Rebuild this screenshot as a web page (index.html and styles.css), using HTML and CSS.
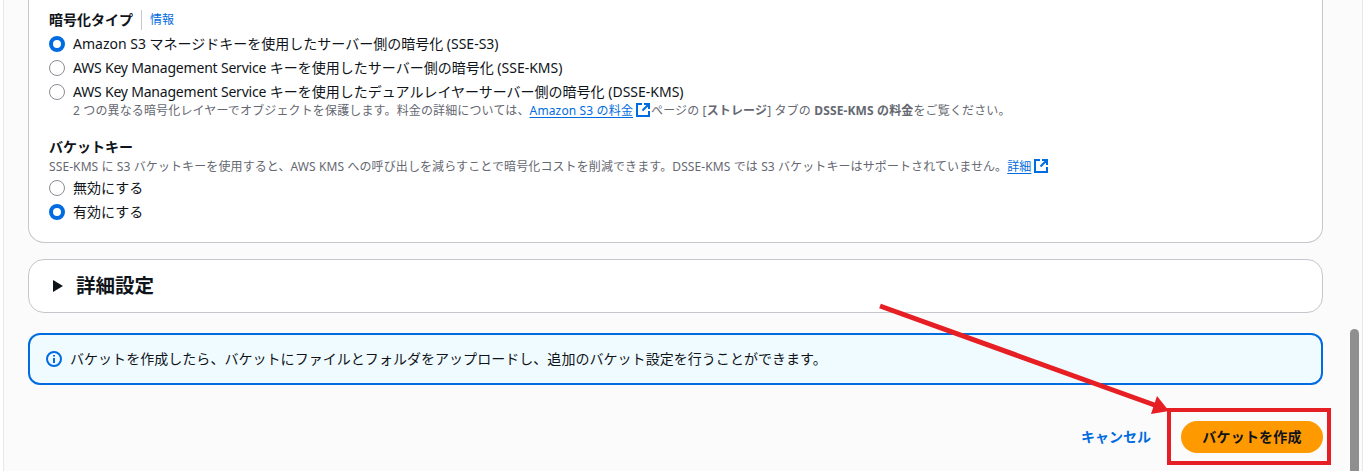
FILE: index.html
```html
<!DOCTYPE html>
<html lang="ja">
<head>
<meta charset="utf-8">
<title>バケットを作成</title>
<link rel="stylesheet" href="styles.css">
</head>
<body>
<div class="page">
  <main class="content">
    <section class="card card-main">
      <div class="field-label"><span>暗号化タイプ</span><a class="info" href="#">情報</a></div>
      <div class="radios">
        <div class="radio-row"><span class="radio checked"></span><div class="radio-text">Amazon S3 マネージドキーを使用したサーバー側の暗号化 (SSE-S3)</div></div>
        <div class="radio-row"><span class="radio"></span><div class="radio-text"><span class="latin">AWS Key Management Service</span> キーを使用したサーバー側の暗号化 (SSE-KMS)</div></div>
        <div class="radio-row"><span class="radio"></span><div class="radio-text"><span class="latin">AWS Key Management Service</span> キーを使用したデュアルレイヤーサーバー側の暗号化 (DSSE-KMS)
          <div class="desc desc-wide">2 つの異なる暗号化レイヤーでオブジェクトを保護します。料金の詳細については、<a class="link" href="#">Amazon S3 の料金</a><svg class="ext" viewBox="0 0 16 16"><path d="M14 9v5H2V2h5M9 2h5v5M14 2 7.500 8.500"/></svg>ページの [<b>ストレージ</b>] タブの <b>DSSE-KMS の料金</b>をご覧ください。</div>
        </div></div>
      </div>
      <div class="field-label key-label"><span>バケットキー</span></div>
      <div class="desc key-desc">SSE-KMS に S3 バケットキーを使用すると、AWS KMS への呼び出しを減らすことで暗号化コストを削減できます。DSSE-KMS では S3 バケットキーはサポートされていません。<a class="link" href="#">詳細</a><svg class="ext" viewBox="0 0 16 16"><path d="M14 9v5H2V2h5M9 2h5v5M14 2 7.500 8.500"/></svg></div>
      <div class="radios key-radios">
        <div class="radio-row"><span class="radio"></span><div class="radio-text">無効にする</div></div>
        <div class="radio-row"><span class="radio checked"></span><div class="radio-text">有効にする</div></div>
      </div>
    </section>

    <section class="card card-advanced">
      <span class="caret"></span><h2>詳細設定</h2>
    </section>

    <section class="alert">
      <svg class="info-icon" viewBox="0 0 16 16"><circle cx="8" cy="8" r="7"/><path d="M8 7v5M8 4v1.500"/></svg>
      <span class="alert-text">バケットを作成したら、バケットにファイルとフォルダをアップロードし、追加のバケット設定を行うことができます。</span>
    </section>

    <div class="actions">
      <a class="cancel" href="#">キャンセル</a>
      <button class="primary" type="button">バケットを作成</button>
    </div>
  </main>
  <div class="scroll-thumb"></div>
  <div class="mark-box"></div>
  <svg class="mark-arrow" viewBox="0 0 1366 471"><path class="shaft" d="M880 306 1160 407"/><path class="head" d="M1169 411 1157 396 1151 414Z"/></svg>
</div>
</body>
</html>
```
FILE: styles.css
```css
* { box-sizing: border-box; }
html, body { margin: 0; padding: 0; }
body {
  font-family: "Noto Sans", "Noto Sans CJK JP", sans-serif;
  font-size: 14px;
  line-height: 20px;
  color: #0f141a;
  background: #fff;
  overflow: hidden;
}
a { color: #006ce0; }
.page {
  position: relative;
  width: 1360px;
  height: 471px;
  overflow: hidden;
  margin: 0 0 0 3px;
  border-left: 1px solid #e8e8e8;
  border-right: 1px solid #e8e8e8;
  background: #fbfbfb;
}
.content { padding-left: 24px; width: 1319px; }
.card {
  background: #fff;
  border: 1px solid #c6c6cd;
  border-radius: 16px;
}
.card-main {
  border-top: 0;
  border-top-left-radius: 0;
  border-top-right-radius: 0;
  padding: 10px 20px 20px;
  height: 243px;
}
.field-label { display: flex; align-items: center; font-weight: 700; height: 20px; }
.info {
  font-size: 12px;
  font-weight: 400;
  text-decoration: none;
  margin-left: 8px;
  padding-left: 8px;
  border-left: 1px solid #c6c6cd;
  line-height: 20px;
}
.radios { display: flex; flex-direction: column; gap: 4px; margin-top: 4px; }
.radio-row { display: flex; gap: 8px; align-items: flex-start; }
.radio {
  flex: none;
  width: 16px;
  height: 16px;
  margin-top: 2px;
  border-radius: 50%;
  border: 1px solid #8c8c94;
  background: #fff;
}
.radio.checked { border: 4px solid #006ce0; }
.latin { letter-spacing: -0.2px; }
.desc { font-size: 12px; line-height: 16px; color: #656871; letter-spacing: 0.1px; }
.desc-wide { letter-spacing: 0.14px; }
.link { color: #006ce0; text-decoration: underline; text-underline-offset: 2px; }
.ext {
  width: 16px;
  height: 16px;
  margin-left: 2px;
  vertical-align: -3px;
  fill: none;
  stroke: #006ce0;
  stroke-width: 2;
}
.key-label { margin-top: 18px; }
.key-desc { margin-top: 1px; }
.key-radios { margin-top: 3px; }
.card-advanced {
  display: flex;
  align-items: center;
  height: 54px;
  margin-top: 16px;
  padding-left: 24px;
}
.caret {
  width: 0;
  height: 0;
  border-left: 10px solid #0f141a;
  border-top: 6px solid transparent;
  border-bottom: 6px solid transparent;
  margin-right: 13px;
}
h2 { margin: 0; font-size: 19.500px; line-height: 24px; font-weight: 700; }
.alert {
  display: flex;
  align-items: center;
  gap: 8px;
  height: 52px;
  margin-top: 20px;
  padding-left: 16px;
  background: #f0fbff;
  border: 2px solid #006ce0;
  border-radius: 12px;
}
.alert-text { letter-spacing: 0.04px; }
.info-icon {
  width: 16px;
  height: 16px;
  fill: none;
  stroke: #006ce0;
  stroke-width: 2;
}
.actions {
  display: flex;
  justify-content: flex-end;
  align-items: center;
  gap: 30px;
  margin-top: 36px;
}
.cancel { font-weight: 700; text-decoration: none; }
.primary {
  width: 142px;
  height: 32px;
  border: 0;
  border-radius: 16px;
  background: #ff9900;
  color: #0f141a;
  font: 700 14px/20px "Noto Sans", "Noto Sans CJK JP", sans-serif;
  letter-spacing: 0.2px;
}
.scroll-thumb {
  position: absolute;
  left: 1346px;
  top: 329px;
  width: 9px;
  height: 160px;
  border-radius: 5px;
  background: #8f8f8f;
}
.mark-box {
  position: absolute;
  left: 1163px;
  top: 408px;
  width: 164px;
  height: 57px;
  border: 4px solid #e61f25;
}
.mark-arrow {
  position: absolute;
  left: -4px;
  top: 0;
  width: 1366px;
  height: 471px;
  pointer-events: none;
}
.shaft { stroke: #e61f25; stroke-width: 5; fill: none; }
.head { fill: #e61f25; }
```
